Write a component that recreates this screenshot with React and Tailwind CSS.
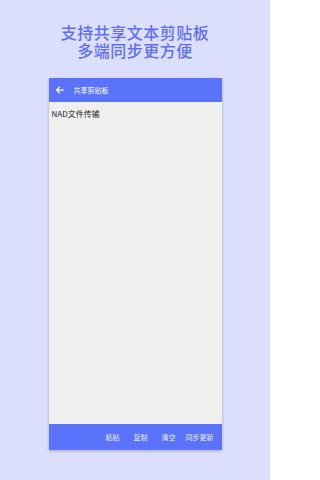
import React from "react";

const App = () => {
  return (
    <div
      className="w-[270px] h-[480px] bg-[#dcdffb] flex flex-col items-center overflow-hidden"
      style={{ fontFamily: '"Noto Sans CJK SC", "Noto Sans", sans-serif' }}
    >
      <p className="mt-[23px] text-[16px] leading-[18px] font-medium text-[#5f6ff0] text-center tracking-[0.5px]">
        支持共享文本剪贴板
        <br />
        多端同步更方便
      </p>

      <div className="mt-[19px] w-[173px] flex flex-col shadow-[0_1px_3px_rgba(0,0,0,0.25)]">
        <div className="h-[24px] bg-[#5b72fb] flex items-center px-[6px] gap-[9px]">
          <svg width="10" height="10" viewBox="0 0 24 24" fill="none" stroke="#ffffff" strokeWidth="3" strokeLinecap="round" strokeLinejoin="round">
            <path d="M20 12H5" />
            <path d="M11 5l-7 7 7 7" />
          </svg>
          <span className="text-[7px] text-white">共享剪贴板</span>
        </div>
        <div className="h-[322px] bg-[#efefef] px-[3px] pt-[7px]">
          <div className="text-[8px] leading-[10px] text-[#222]">NAD文件传输</div>
        </div>
        <div className="h-[26px] bg-[#5b72fb] flex items-center justify-end pr-[8px] gap-[14px] text-[7px] text-[#e8ebff]">
          <span>粘贴</span>
          <span>复制</span>
          <span>清空</span>
          <span className="-ml-[4px]">同步更新</span>
        </div>
      </div>
    </div>
  );
};

export default App;
